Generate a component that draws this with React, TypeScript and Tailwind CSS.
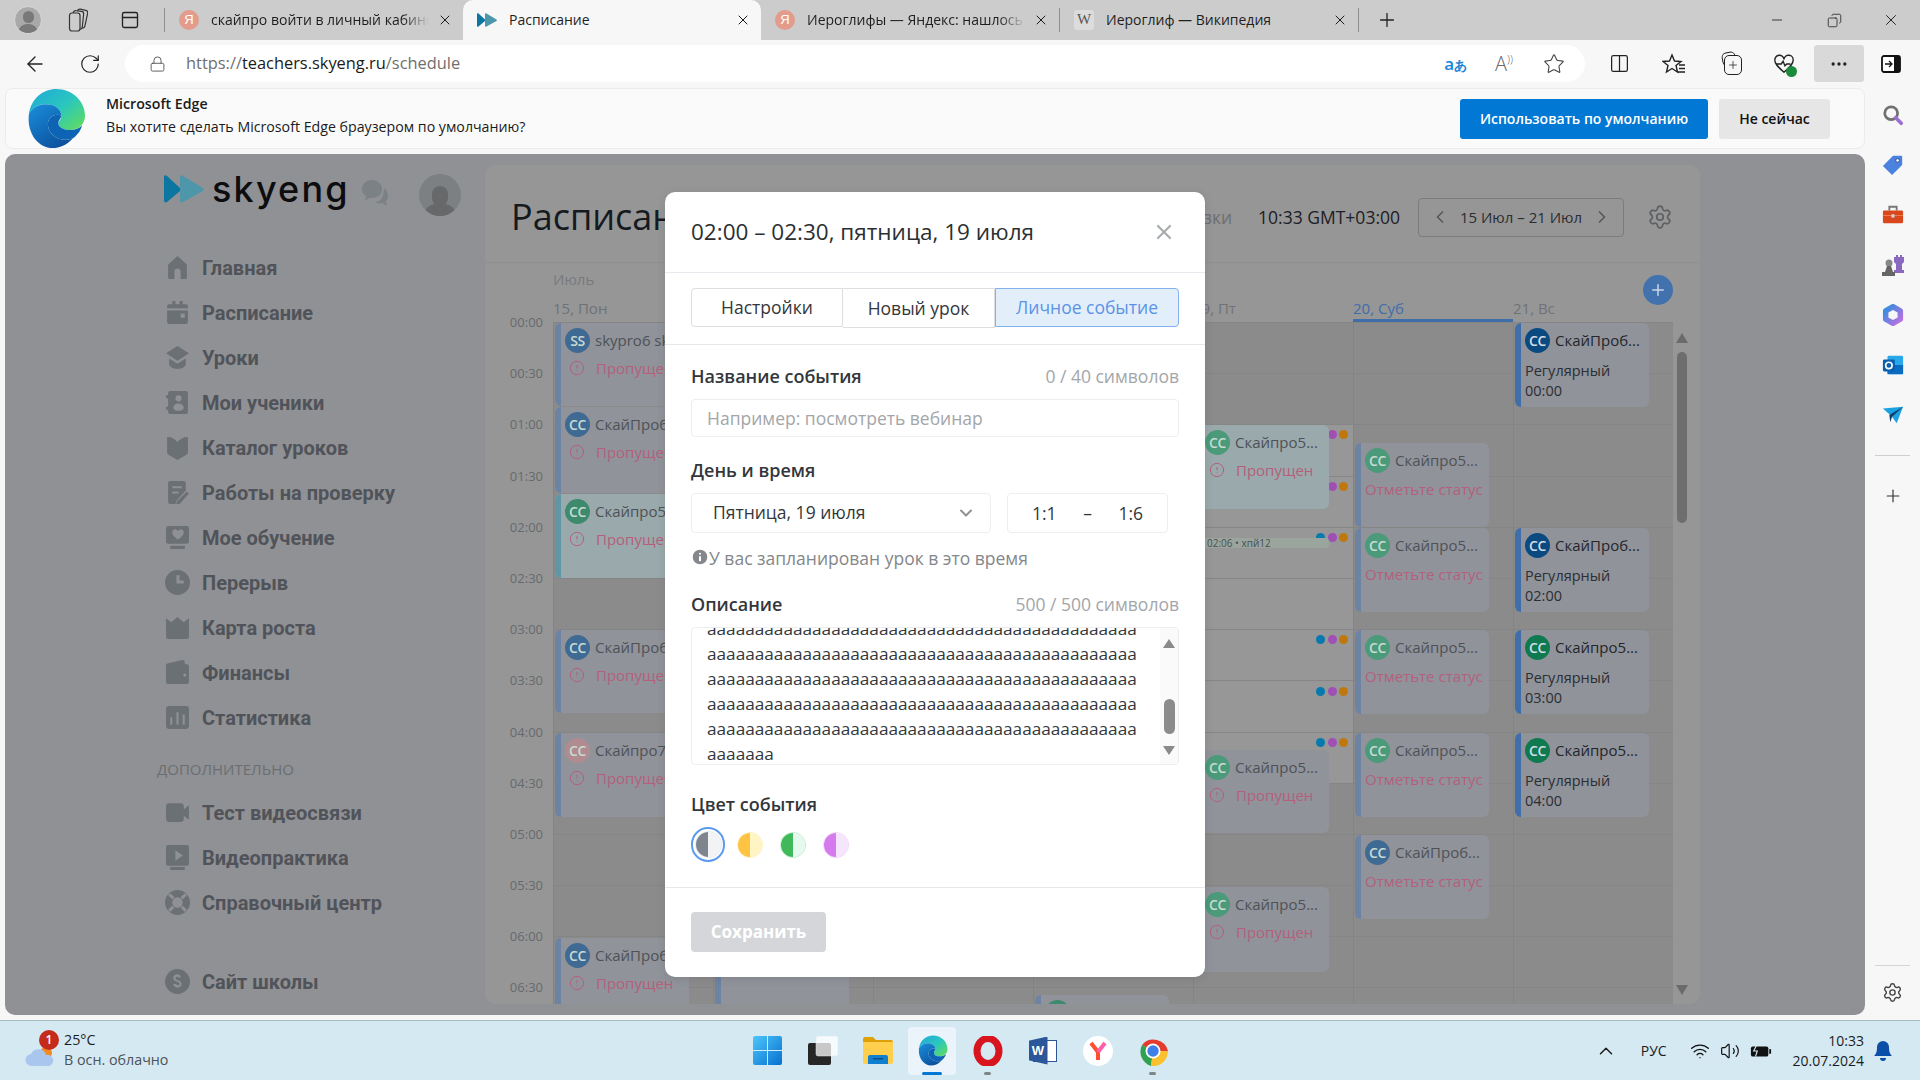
import { ReactNode } from "react";
import {
  ArrowLeft, RotateCw, Lock, Star, X, Plus, Minus, Copy, Ellipsis, Settings, Columns2, ChevronLeft,
  ChevronRight, ChevronDown, ChevronUp, Wifi, Volume2, Info, AlertCircle, PanelTop,
} from "lucide-react";

const GRID_TOP = 322;

// ---- drawn icons ----
function EdgeLogo({ className }: { className: string }) {
  return (
    <svg viewBox="0 0 64 64" className={className}>
      <defs>
        <linearGradient id="edgeA" x1="0" y1="0" x2="1" y2="0.9">
          <stop offset="0" stopColor="#1fa7dc" />
          <stop offset="0.55" stopColor="#2bc7bd" />
          <stop offset="1" stopColor="#5fdc5f" />
        </linearGradient>
        <linearGradient id="edgeB" x1="0" y1="0" x2="0.7" y2="1">
          <stop offset="0" stopColor="#1a8fdc" />
          <stop offset="1" stopColor="#0c4f9c" />
        </linearGradient>
      </defs>
      <path d="M4 28C6 11 19 1 33 1c17 0 30 13 30 28 0 9-7 15-16 15-7 0-12-3-12-7 0-3 3-3 3-8 0-7-8-12-17-12C13 17 7 22 4 28z" fill="url(#edgeA)" />
      <path d="M4 28c3-7 10-11 17-11 10 0 17 5 17 12-6-3-14 1-14 9 0 11 13 20 26 15-6 7-14 10-21 10C15 63 2 49 4 28z" fill="url(#edgeB)" />
      <path d="M24 38c0-8 8-12 14-9 0 3-3 4-3 8 0 4 5 7 12 7 6 0 10-2 13-5-2 7-6 11-10 14-13 5-26-4-26-15z" fill="#0e64b4" />
    </svg>
  );
}

function SkyengMark({ className }: { className: string }) {
  return (
    <svg viewBox="0 0 40 28" className={className}>
      <path d="M0 2c0-2 2-2 3-1l13 12c1 1 1 2 0 3L3 27c-1 1-3 0-3-1z" fill="#0b76a0" />
      <path d="M16 2c0-2 2-2 3-1l20 12c1 1 1 2 0 3L19 27c-1 1-3 0-3-1z" fill="#4e96aa" />
    </svg>
  );
}

function YandexIcon() {
  return (
    <span className="w-5 h-5 rounded-full bg-[#e39b8c] flex items-center justify-center text-white text-[13px] font-['Liberation_Sans',sans-serif]">Я</span>
  );
}

const sideIcons: Record<string, ReactNode> = {
  home: <path d="M12 1 3 9v13a1 1 0 0 0 1 1h5v-7a3 3 0 0 1 6 0v7h5a1 1 0 0 0 1-1V9z" />,
  calendar: <path fillRule="evenodd" d="M7 1h3v3h4V1h3v3h3a2 2 0 0 1 2 2v2H2V6a2 2 0 0 1 2-2h3zM2 10h20v11a2 2 0 0 1-2 2H4a2 2 0 0 1-2-2zm13 3v4h4v-4z" />,
  lessons: <path d="M12 1 1 8l11 7 11-7zM4 13v5c0 3 4 5 8 5s8-2 8-5v-5l-8 5z" />,
  students: <path fillRule="evenodd" d="M5 1h15a2 2 0 0 1 2 2v18a2 2 0 0 1-2 2H5a2 2 0 0 1-2-2v-2H1v-3h2V8H1V5h2V3a2 2 0 0 1 2-2zm8 4a3 3 0 1 0 0 6 3 3 0 0 0 0-6zm-5 12c0 2 2 3 5 3s5-1 5-3c0-2-2-4-5-4s-5 2-5 4z" />,
  book: <path d="M2 2c4 0 8 2 10 5 2-3 6-5 10-5v15c0 2-6 4-10 7-4-3-10-5-10-7z" />,
  review: <path fillRule="evenodd" d="M5 1h13a2 2 0 0 1 2 2v7L11 20l-1 3H5a2 2 0 0 1-2-2V3a2 2 0 0 1 2-2zm2 5v2h9V6zm0 5v2h6v-2zm14 0 2 2-9 10h-3v-2z" />,
  study: <path fillRule="evenodd" d="M3 1h18a2 2 0 0 1 2 2v13a2 2 0 0 1-2 2H3a2 2 0 0 1-2-2V3a2 2 0 0 1 2-2zm12 3c-1 0-2 1-2.500 2C12 5 11 4 10 4 8 4 7 5.500 7 7c0 3 3 5 5.500 7C15 12 18 10 18 7c0-1.500-1-3-3-3zM5 20h14v3H5z" />,
  clock: <path fillRule="evenodd" d="M12 0a12 12 0 1 1 0 24 12 12 0 0 1 0-24zm-1 5v8h7v-3h-4V5z" />,
  crown: <path d="M1 3l5 4 6-5 6 5 5-4v18a2 2 0 0 1-2 2H3a2 2 0 0 1-2-2z" />,
  wallet: <path fillRule="evenodd" d="M3 3l14-3a2 2 0 0 1 2 2v2h2a2 2 0 0 1 2 2v15a2 2 0 0 1-2 2H3a2 2 0 0 1-2-2V5a2 2 0 0 1 2-2zm16 10a1.500 1.500 0 1 0 0 3 1.500 1.500 0 0 0 0-3z" />,
  stats: <path fillRule="evenodd" d="M4 1h16a3 3 0 0 1 3 3v16a3 3 0 0 1-3 3H4a3 3 0 0 1-3-3V4a3 3 0 0 1 3-3zm1 11v7h2v-7zm6-5v12h2V7zm6 2v10h2V9z" />,
  video: <path d="M4 3h11a3 3 0 0 1 3 3v3l5-4v14l-5-4v3a3 3 0 0 1-3 3H4a3 3 0 0 1-3-3V6a3 3 0 0 1 3-3z" />,
  practice: <path fillRule="evenodd" d="M3 0h18a2 2 0 0 1 2 2v16a2 2 0 0 1-2 2H3a2 2 0 0 1-2-2V2a2 2 0 0 1 2-2zm7 5v10l7-5zM5 21h14v3H5z" />,
  help: <path fillRule="evenodd" d="M12 0a12 12 0 1 1 0 24 12 12 0 0 1 0-24zm0 7a5 5 0 1 0 0 10 5 5 0 0 0 0-10zM5 3 3 5l4 4 2-2zm14 0-4 4 2 2 4-4zM7 15l-4 4 2 2 4-4zm10 0-2 2 4 4 2-2z" />,
  site: <path fillRule="evenodd" d="M12 0a12 12 0 1 1 0 24 12 12 0 0 1 0-24zm3 8c0-2-1.500-3-3-3s-4 1-4 3.500C8 13 14 11.500 14 14.500c0 1.500-3.500 1.500-4 0H8c0 2 2 3.500 4 3.500s4-1.500 4-3.500c0-4-6-3-6-6 0-1.500 3.500-1.500 3.500 0z" />,
};

const navTop = [
  ["home", "Главная"], ["calendar", "Расписание"], ["lessons", "Уроки"], ["students", "Мои ученики"],
  ["book", "Каталог уроков"], ["review", "Работы на проверку"], ["study", "Мое обучение"], ["clock", "Перерыв"],
  ["crown", "Карта роста"], ["wallet", "Финансы"], ["stats", "Статистика"],
];
const navExtra = [["video", "Тест видеосвязи"], ["practice", "Видеопрактика"], ["help", "Справочный центр"]];

function NavItem({ icon, label }: { icon: string; label: string }) {
  return (
    <div className="h-[45px] flex items-center">
      <svg viewBox="0 0 24 24" className="w-[25px] h-[25px] ml-[1px] mr-[12px] fill-[#6b7074] shrink-0">{sideIcons[icon]}</svg>
      <span className="text-[20px] font-bold text-[#50545a] font-['Roboto',sans-serif]">{label}</span>
    </div>
  );
}

function SchoolSidebar() {
  return (
    <aside className="w-[480px] shrink-0 pl-[159px] flex flex-col">
      <div className="h-[58px] mt-[6px] flex items-center relative">
        <SkyengMark className="w-[40px] h-[28px]" />
        <span className="ml-[8px] text-[36px] leading-[28px] font-medium tracking-[0.06em] text-[#0d0d0f] font-['Inter',sans-serif]">skyeng</span>
        <svg viewBox="0 0 28 28" className="w-[28px] h-[28px] ml-[11px] mt-[8px] fill-[#7b8185]">
          <path d="M11 1c6 0 10 4 10 9s-4 9-10 9H8l-4 3 1-5c-3-2-4-4-4-7 0-5 4-9 10-9z" />
          <path d="M23 9c3 2 4 5 4 8 0 2-1 4-2 5l1 5-5-3c-3 1-5 0-7-1 5 0 9-4 9-14z" />
        </svg>
        <span className="ml-[30px] w-[42px] h-[42px] rounded-full bg-[#7d8083] overflow-hidden flex flex-col items-center justify-end mt-[12px]">
          <span className="w-[16px] h-[20px] rounded-full bg-[#66686a]" />
          <span className="w-[32px] h-[12px] rounded-t-full bg-[#66686a] -mt-[2px]" />
        </span>
      </div>
      <nav className="mt-[27px] flex flex-col">
        {navTop.map(([icon, label]) => <NavItem key={label} icon={icon} label={label} />)}
        <div className="h-[31px] mt-[14px] -ml-[7px] flex items-center text-[15px] text-[#6a6e73] font-['Open_Sans',sans-serif]">ДОПОЛНИТЕЛЬНО</div>
        <div className="mt-[5px]" />
        {navExtra.map(([icon, label]) => <NavItem key={label} icon={icon} label={label} />)}
        <div className="mt-[34px]"><NavItem icon="site" label="Сайт школы" /></div>
      </nav>
    </aside>
  );
}

// ---- schedule ----
type Ev = { top: number; h: number; initials?: string; avatar?: string; name?: string; time?: string; kind: "missed" | "mark" | "regular" | "plain"; tint?: string };

const columns: Ev[][] = [
  [
    { top: 323, h: 83, initials: "SS", avatar: "bg-[#3f6a93]", name: "skypro6 skypro6", kind: "missed" },
    { top: 407, h: 86, initials: "CC", avatar: "bg-[#3f6a93]", name: "СкайПроб6", kind: "missed" },
    { top: 494, h: 84, initials: "CC", avatar: "bg-[#3d8a6c]", name: "Скайпро5", kind: "missed", tint: "bg-[#9aa9ab]" },
    { top: 630, h: 83, initials: "CC", avatar: "bg-[#3f6a93]", name: "СкайПроб6", kind: "missed" },
    { top: 733, h: 84, initials: "CC", avatar: "bg-[#b08c90]", name: "Скайпро7", kind: "missed" },
    { top: 938, h: 84, initials: "CC", avatar: "bg-[#3f6a93]", name: "СкайПроб6", kind: "missed" },
  ],
  [{ top: 900, h: 130, kind: "plain" }],
  [],
  [{ top: 995, h: 84, initials: "CC", avatar: "bg-[#3d8a6c]", name: "Скайпро5", kind: "missed" }],
  [
    { top: 425, h: 84, initials: "CC", avatar: "bg-[#4b9a7a]", name: "Скайпро5...", kind: "missed", tint: "bg-[#9aa9ab]" },
    { top: 750, h: 83, initials: "CC", avatar: "bg-[#4b9a7a]", name: "Скайпро5...", kind: "missed" },
    { top: 887, h: 85, initials: "CC", avatar: "bg-[#4b9a7a]", name: "Скайпро5...", kind: "missed" },
  ],
  [
    { top: 443, h: 84, initials: "CC", avatar: "bg-[#4b9a7a]", name: "Скайпро5...", kind: "mark" },
    { top: 528, h: 84, initials: "CC", avatar: "bg-[#4b9a7a]", name: "Скайпро5...", kind: "mark" },
    { top: 630, h: 84, initials: "CC", avatar: "bg-[#4b9a7a]", name: "Скайпро5...", kind: "mark" },
    { top: 733, h: 84, initials: "CC", avatar: "bg-[#4b9a7a]", name: "Скайпро5...", kind: "mark" },
    { top: 835, h: 84, initials: "CC", avatar: "bg-[#3f6a93]", name: "СкайПроб...", kind: "mark" },
  ],
  [
    { top: 323, h: 84, initials: "CC", avatar: "bg-[#0a4a80]", name: "СкайПроб...", time: "00:00", kind: "regular" },
    { top: 528, h: 84, initials: "CC", avatar: "bg-[#0a4a80]", name: "СкайПроб...", time: "02:00", kind: "regular" },
    { top: 630, h: 84, initials: "CC", avatar: "bg-[#0f7a50]", name: "Скайпро5...", time: "03:00", kind: "regular" },
    { top: 733, h: 84, initials: "CC", avatar: "bg-[#0f7a50]", name: "Скайпро5...", time: "04:00", kind: "regular" },
  ],
];

function EventCard({ ev }: { ev: Ev }) {
  const regular = ev.kind === "regular";
  const bar = ev.tint ? "bg-[#5f97a5]" : regular ? "bg-[#3f6ea9]" : "bg-[#6c83a3]";
  return (
    <div
      className={`absolute left-[1px] w-[134px] rounded-[6px] overflow-hidden flex ${ev.tint ?? "bg-[#90939a]"}`}
      style={{ top: ev.top - GRID_TOP, height: ev.h }}
    >
      <div className={`w-[6px] shrink-0 ${bar}`} />
      {ev.kind !== "plain" && (
        <div className="flex-1 min-w-0 pl-[4px] pt-[5px]">
          <div className="flex items-center h-[25px]">
            <span className={`w-[25px] h-[25px] rounded-full shrink-0 flex items-center justify-center text-[14px] font-semibold tracking-[-0.03em] ${regular ? "text-[#d3dde6]" : "text-[#c8dbd3]"} ${ev.avatar}`}>{ev.initials}</span>
            <span className={`ml-[5px] text-[15px] whitespace-nowrap ${regular ? "text-[#23262a]" : "text-[#4e5257]"}`}>{ev.name}</span>
          </div>
          {regular && (
            <div className="mt-[8px] text-[14.5px] leading-[20px] text-[#2b2e33]">Регулярный<br />{ev.time}</div>
          )}
          {ev.kind === "missed" && (
            <div className="mt-[4px] flex items-center h-[22px] text-[15px] text-[#b55f7c]">
              <AlertCircle className="w-[16px] h-[16px] ml-[4px] mr-[11px] shrink-0" strokeWidth={1.5} />Пропущен
            </div>
          )}
          {ev.kind === "mark" && <div className="mt-[5px] h-[22px] text-[15px] leading-[22px] text-[#b55f7c] whitespace-nowrap">Отметьте статус</div>}
        </div>
      )}
    </div>
  );
}

const days = ["15, Пон", "16, Вт", "17, Ср", "18, Чт", "19, Пт", "20, Суб", "21, Вс"];
const times = Array.from({ length: 14 }, (_, i) => `${String(Math.floor(i / 2)).padStart(2, "0")}:${i % 2 ? "30" : "00"}`);
const dotRows: [number, boolean][] = [[434, false], [486, false], [537, true], [639, true], [691, true], [742, true]];

function Schedule() {
  return (
    <main className="w-[1215px] shrink-0 mt-[11px] h-[839px] rounded-[10px] bg-[#969696] flex flex-col overflow-hidden font-['Open_Sans',sans-serif] relative">
      <header className="h-[98px] shrink-0 border-b border-[#8f8f8f] flex items-center pt-[7px] pl-[26px] pr-[27px]">
        <h1 className="text-[36px] text-[#151a1f] font-normal">Расписание</h1>
        <span className="ml-auto text-[17.500px] text-[#6c6f72]">Подсказки</span>
        <span className="ml-[26px] text-[17.500px] text-[#1d2024]">10:33 GMT+03:00</span>
        <div className="ml-[18px] w-[206px] h-[39px] rounded-[4px] border border-[#7b7c7e] flex items-center justify-between px-[11px] text-[15px] text-[#2a2d31]">
          <ChevronLeft className="w-[20px] h-[20px] text-[#55585c]" />15 Июл – 21 Июл<ChevronRight className="w-[20px] h-[20px] text-[#55585c]" />
        </div>
        <Settings className="ml-[23px] w-[26px] h-[26px] text-[#5e6164]" strokeWidth={1.6} />
      </header>
      <div className="flex-1 flex min-h-0">
        <div className="w-[68px] shrink-0 pt-[49px]">
          {times.map((t) => (
            <div key={t} className="h-[51.2px] pr-[10px] text-right text-[13px] leading-[20px] text-[#666a6e]">{t}</div>
          ))}
        </div>
        <div className="w-[1120px] shrink-0 flex flex-col">
          <div className="h-[32px] shrink-0 flex items-center text-[15px] text-[#777a7d]">Июль</div>
          <div className="h-[27px] shrink-0 grid grid-cols-7">
            {days.map((d, i) => (
              <div key={d} className={`pt-[3px] text-[15px] leading-[21px] ${i === 5 ? "text-[#3f6ea9] border-b-[3px] border-[#3f6ea9]" : "text-[#6f7276]"}`}>{d}</div>
            ))}
          </div>
          <div className="flex-1 grid grid-cols-7 overflow-hidden">
            {columns.map((events, c) => (
              <div key={c} className="relative border-l border-[#848484] flex flex-col">
                {times.map((t, r) => (
                  <div key={t} className={`h-[51.2px] shrink-0 border-t ${c === 4 && r >= 2 && r < 9 ? "bg-[#979797] border-[#868686]" : "bg-[#8b8b8b] border-[#858585]"}`} />
                ))}
                {c === 4 && (
                  <>
                    {dotRows.map(([y, blue]) => (
                      <div key={y} className="absolute right-[5px] flex gap-[2.5px]" style={{ top: y - 4.5 - GRID_TOP }}>
                        {blue && <span className="w-[9px] h-[9px] rounded-full bg-[#0779ae]" />}
                        <span className="w-[9px] h-[9px] rounded-full bg-[#a050b4]" />
                        <span className="w-[9px] h-[9px] rounded-full bg-[#c0780e]" />
                      </div>
                    ))}
                    <div className="absolute left-[10px] w-[125px] top-[216px] h-[10px] bg-[#9aa59e] rounded-r-[4px]" />
                    <div className="absolute left-[13px] top-[213px] text-[10px] leading-[16px] text-[#4b4f53] whitespace-nowrap">02:06 • хпй12</div>
                  </>
                )}
                {events.map((ev) => <EventCard key={ev.top} ev={ev} />)}
              </div>
            ))}
          </div>
        </div>
        <div className="w-[18px] shrink-0 mt-[59px] flex flex-col items-center">
          <svg viewBox="0 0 12 10" className="w-[12px] h-[10px] mt-[11px] fill-[#6b6b6c]"><path d="M6 0l6 10H0z" /></svg>
          <div className="w-[10px] h-[171px] mt-[9px] rounded-full bg-[#6e6e6f]" />
          <svg viewBox="0 0 12 10" className="w-[12px] h-[10px] mt-auto mb-[9px] fill-[#6b6b6c]"><path d="M6 10L0 0h12z" /></svg>
        </div>
      </div>
      <span className="absolute left-[1158px] top-[110px] w-[30px] h-[30px] rounded-full bg-[#4272ad] flex items-center justify-center">
        <Plus className="w-[18px] h-[18px] text-[#c9d6e6]" strokeWidth={2} />
      </span>
    </main>
  );
}

// ---- modal ----
const swatches = [
  ["bg-[#fec343]", "bg-[#fff4c4]", "border-[#fff0b8]"],
  ["bg-[#3fb95a]", "bg-[#e6f9ee]", "border-[#bfeccd]"],
  ["bg-[#d57bee]", "bg-[#f6e6fd]", "border-[#efd5fa]"],
];

function FieldHead({ title, count }: { title: string; count?: string }) {
  return (
    <div className="h-[24px] flex items-center justify-between">
      <span className="text-[18px] font-semibold text-[#33373b]">{title}</span>
      {count && <span className="text-[17.500px] text-[#a3a6aa]">{count}</span>}
    </div>
  );
}

function EventModal() {
  const aLine = "а".repeat(45);
  return (
    <section className="absolute left-[665px] top-[192px] w-[540px] h-[785px] bg-white rounded-[10px] font-['Open_Sans',sans-serif] text-[#33373b] flex flex-col shadow-[0_2px_10px_rgba(0,0,0,0.1)]">
      <div className="h-[81px] shrink-0 border-b border-[#e7ebf0] flex items-center justify-between pl-[26px] pr-[29px]">
        <h2 className="text-[22.500px] font-normal text-[#2b2f33]">02:00 – 02:30, пятница, 19 июля</h2>
        <X className="w-[24px] h-[24px] text-[#a8abae]" strokeWidth={2.2} />
      </div>
      <div className="h-[72px] shrink-0 border-b border-[#e6e8ea] px-[26px] pt-[15px]">
        <div className="flex text-[17.500px]">
          <div className="w-[152px] h-[39px] rounded-l-[4px] border border-[#dcdee0] flex items-center justify-center">Настройки</div>
          <div className="w-[152px] h-[40px] border-y border-r border-[#dcdee0] flex items-center justify-center">Новый урок</div>
          <div className="w-[184px] h-[39px] rounded-r-[4px] border border-[#83b1ee] bg-[#e3eefb] text-[#5a93e6] flex items-center justify-center">Личное событие</div>
        </div>
      </div>
      <div className="flex-1 px-[26px] pt-[19px]">
        <FieldHead title="Название события" count="0 / 40 символов" />
        <div className="mt-[11px] h-[38px] rounded-[4px] border border-[#eceef0] flex items-center pl-[15px] text-[17.500px] text-[#a3a6a9]">Например: посмотреть вебинар</div>
        <div className="mt-[21px]"><FieldHead title="День и время" /></div>
        <div className="mt-[11px] flex gap-[16px] text-[17.500px]">
          <div className="w-[300px] h-[40px] rounded-[4px] border border-[#eceef0] flex items-center pl-[21px] pr-[14px] justify-between"><span className="-mt-[1px]">Пятница, 19 июля</span><ChevronDown className="w-[20px] h-[20px] text-[#909396]" strokeWidth={2.5} /></div>
          <div className="w-[161px] h-[40px] rounded-[4px] border border-[#eceef0] flex items-center justify-between px-[24px]"><span>1:1</span><span>–</span><span>1:6</span></div>
        </div>
        <div className="mt-[13px] h-[24px] flex items-center text-[17.500px] text-[#84878b]">
          <Info className="w-[20px] h-[20px] -ml-[1px] -mr-[1px] text-white fill-[#84878b] -mt-[3px] shrink-0" strokeWidth={2.5} />У вас запланирован урок в это время
        </div>
        <div className="mt-[22px]"><FieldHead title="Описание" count="500 / 500 символов" /></div>
        <div className="mt-[11px] h-[138px] rounded-[4px] border border-[#eceef0] overflow-hidden flex">
          <div className="flex-1 pl-[15px] -mt-[12px] text-[17.200px] leading-[25px] text-[#33373b]">
            {[0, 1, 2, 3, 4].map((i) => <div key={i}>{aLine}</div>)}
            <div>ааааааа</div>
          </div>
          <div className="w-[18px] shrink-0 bg-[#fafafa] flex flex-col items-center">
            <svg viewBox="0 0 12 9" className="w-[12px] h-[9px] mt-[11px] fill-[#8a8a8a]"><path d="M6 0l6 9H0z" /></svg>
            <div className="w-[11px] h-[35px] mt-[51px] rounded-full bg-[#8b8b8b]" />
            <svg viewBox="0 0 12 9" className="w-[12px] h-[9px] mt-[12px] fill-[#8a8a8a]"><path d="M6 9L0 0h12z" /></svg>
          </div>
        </div>
        <div className="mt-[27px]"><FieldHead title="Цвет события" /></div>
        <div className="mt-[11px] flex items-center h-[35px]">
          <div className="w-[34px] h-[35px] rounded-full border-2 border-[#5b9bf0] flex items-center justify-center">
            <div className="w-[27px] h-[27px] rounded-full overflow-hidden flex border border-[#e5e7ea]">
              <span className="w-1/2 bg-[#7f858d]" /><span className="w-1/2 bg-[#f1f3f5]" />
            </div>
          </div>
          {swatches.map(([a, b, edge], i) => (
            <div key={a} className={`w-[26px] h-[26px] rounded-full overflow-hidden flex border ${edge} ${i === 0 ? "ml-[12px]" : "ml-[17px]"}`}>
              <span className={`w-1/2 ${a}`} /><span className={`w-1/2 ${b}`} />
            </div>
          ))}
        </div>
      </div>
      <div className="h-[90px] shrink-0 border-t border-[#e6e8ea] px-[26px] pt-[24px]">
        <div className="w-[135px] h-[40px] rounded-[4px] bg-[#d4d6d9] text-white text-[17px] font-bold flex items-center justify-center">Сохранить</div>
      </div>
    </section>
  );
}

// ---- browser chrome ----
function Tab({ icon, title, active, fade }: { icon: ReactNode; title: string; active?: boolean; fade?: boolean }) {
  return (
    <div className={`w-[298px] h-[40px] shrink-0 flex items-center pl-[14px] pr-[10px] pb-[1px] ${active ? "bg-[#f7f7f7] rounded-t-[10px]" : ""}`}>
      <span className="w-[20px] h-[20px] shrink-0 flex items-center justify-center">{icon}</span>
      <span className={`ml-[12px] w-[218px] overflow-hidden whitespace-nowrap text-[14px] text-[#1e1e1e] ${fade ? "[mask-image:linear-gradient(90deg,#000_88%,transparent)]" : ""}`}>{title}</span>
      <X className="w-[16px] h-[16px] ml-auto text-[#1b1b1b]" strokeWidth={1.5} />
    </div>
  );
}

function BrowserTop() {
  return (
    <>
      <div className="h-[40px] shrink-0 bg-[#cccccc] flex items-center">
        <span className="ml-[14px] w-[28px] h-[28px] rounded-full bg-[#a9a9a9] border border-[#d8d8d8] overflow-hidden flex flex-col items-center justify-end">
          <span className="w-[11px] h-[12px] rounded-full bg-[#797979]" />
          <span className="w-[20px] h-[9px] rounded-t-full bg-[#797979] mt-[1px]" />
        </span>
        <svg viewBox="0 0 20 24" className="ml-[26px] w-[20px] h-[24px] fill-none stroke-[#333] stroke-[1.2]">
          <rect x="8" y="1.500" width="10.500" height="18" rx="2.500" transform="rotate(12 13 10)" />
          <rect x="4.500" y="3" width="10.500" height="18" rx="2.500" fill="#cccccc" transform="rotate(6 10 12)" />
          <rect x="1.500" y="5" width="10.500" height="18" rx="2.500" fill="#cccccc" />
        </svg>
        <PanelTop className="ml-[32px] w-[20px] h-[20px] text-[#222]" strokeWidth={1.6} />
        <span className="ml-[24px] w-px h-[24px] bg-[#8e8e8e]" />
        <Tab icon={<YandexIcon />} title="скайпро войти в личный кабинет" fade />
        <Tab active icon={<SkyengMark className="w-[20px] h-[16px]" />} title="Расписание" />
        <Tab icon={<YandexIcon />} title="Иероглифы — Яндекс: нашлось" fade />
        <span className="w-px h-[24px] bg-[#8e8e8e]" />
        <Tab icon={<span className="w-[20px] h-[20px] rounded-[3px] bg-[#dcdcdc] flex items-center justify-center text-[15px] text-[#555] font-['Liberation_Serif',serif]">W</span>} title="Иероглиф — Википедия" />
        <span className="w-px h-[24px] bg-[#8e8e8e]" />
        <Plus className="ml-[17px] w-[22px] h-[22px] text-[#222]" strokeWidth={1.4} />
        <Minus className="ml-auto w-[16px] h-[16px] text-[#222]" strokeWidth={1.3} />
        <Copy className="ml-[42px] w-[15px] h-[15px] text-[#222] -scale-x-100" strokeWidth={1.3} />
        <X className="ml-[40px] mr-[20px] w-[18px] h-[18px] text-[#222]" strokeWidth={1.3} />
      </div>
      <div className="h-[48px] shrink-0 bg-[#f7f7f7] flex items-center pb-[1px]">
        <ArrowLeft className="ml-[23px] w-[24px] h-[24px] text-[#222]" strokeWidth={1.4} />
        <RotateCw className="ml-[32px] w-[22px] h-[22px] text-[#222]" strokeWidth={1.3} />
        <div className="ml-[24px] w-[1460px] h-[37px] rounded-full bg-white flex items-center">
          <Lock className="ml-[24px] w-[17px] h-[18px] text-[#555]" strokeWidth={1.3} />
          <span className="ml-[20px] text-[16.400px] text-[#6f6f6f]">https://<span className="text-[#1b1b1b]">teachers.skyeng.ru</span>/schedule</span>
          <span className="ml-auto text-[17px] font-semibold text-[#1b84d8]">a<span className="text-[13px]">あ</span></span>
          <span className="ml-[28px] text-[20px] text-[#6a6a6a] font-light">A<span className="text-[11px] align-super">))</span></span>
          <Star className="ml-[30px] mr-[20px] w-[22px] h-[22px] text-[#444]" strokeWidth={1.2} />
        </div>
        <Columns2 className="ml-[24px] w-[21px] h-[21px] text-[#222]" strokeWidth={1.4} />
        <svg viewBox="0 0 24 24" className="ml-[32px] w-[24px] h-[24px] fill-none stroke-[#222] stroke-[1.4]">
          <path d="M10 3l2.500 6 6.500.5-5 4 1.500 6.500L10 16.500 4.500 20 6 13.500l-5-4L7.500 9z" />
          <path d="M17 13h6M17 16.500h6M15.500 20H23" />
        </svg>
        <span className="ml-[34px] relative w-[22px] h-[24px] flex items-center justify-center">
          <span className="absolute left-[2px] top-0 w-[14px] h-[14px] border-[1.4px] border-[#222] rounded-[5px] -rotate-12" />
          <span className="relative mt-[3px] ml-[3px] w-[18px] h-[20px] bg-[#f7f7f7] border-[1.4px] border-[#222] rounded-[5px] flex items-center justify-center"><Plus className="w-[12px] h-[12px] text-[#222]" strokeWidth={1.5} /></span>
        </span>
        <span className="ml-[31px] relative w-[22px] h-[22px]">
          <svg viewBox="0 0 24 24" className="w-[22px] h-[22px] fill-none stroke-[#222] stroke-[1.5]"><path d="M12 21C5 15 2 12 2 8a5 5 0 0 1 10-1 5 5 0 0 1 10 1c0 4-3 7-10 13zM4 12h5l2-3 2 5 2-2h4" /></svg>
          <span className="absolute -right-[2px] -bottom-[2px] w-[11px] h-[11px] rounded-full bg-[#1a8a3d]" />
        </span>
        <span className="ml-[19px] w-[50px] h-[37px] rounded-[3px] bg-[#d9d9d9] flex items-center justify-center"><Ellipsis className="w-[20px] h-[20px] text-[#222]" strokeWidth={2} /></span>
        <svg viewBox="0 0 20 20" className="ml-[17px] w-[20px] h-[20px]">
          <rect x="1" y="2" width="18" height="16" rx="2" fill="#fff" stroke="#111" strokeWidth="1.800" />
          <rect x="13" y="2" width="6" height="16" fill="#111" />
          <path d="M4 10h6M8 7l3 3-3 3" fill="none" stroke="#111" strokeWidth="1.300" />
        </svg>
      </div>
    </>
  );
}

function InfoBar() {
  return (
    <div className="h-[61px] shrink-0 rounded-[8px] bg-[#fafafa] border border-[#ececec] flex items-center font-['Open_Sans',sans-serif]">
      <EdgeLogo className="ml-[19px] w-[61px] h-[61px]" />
      <div className="ml-[20px] -mt-[7px] text-[14.200px] leading-[23px] text-[#1b1b1b]">
        <div className="font-semibold">Microsoft Edge</div>
        <div>Вы хотите сделать Microsoft Edge браузером по умолчанию?</div>
      </div>
      <div className="ml-auto w-[248px] h-[40px] rounded-[3px] bg-[#0078d4] text-white text-[14px] font-semibold flex items-center justify-center">Использовать по умолчанию</div>
      <div className="ml-[11px] mr-[34px] w-[111px] h-[40px] rounded-[3px] bg-[#e6e6e6] text-[#111] text-[14px] font-semibold flex items-center justify-center">Не сейчас</div>
    </div>
  );
}

function EdgeSidebar() {
  const box = "h-[50px] flex items-center justify-center shrink-0";
  return (
    <aside className="w-[55px] shrink-0 flex flex-col items-center pt-[2px]">
      <div className={box}><svg viewBox="0 0 24 24" className="w-[22px] h-[22px] fill-none"><circle cx="10" cy="10" r="7" stroke="#707070" strokeWidth="3" /><path d="M15 15l6 6" stroke="#9b6fd0" strokeWidth="4" strokeLinecap="round" /></svg></div>
      <div className={box}><svg viewBox="0 0 24 24" className="w-[22px] h-[22px]"><path d="M12 2h9a1 1 0 0 1 1 1v9L11 23 1 13z" fill="#4c82df" /><circle cx="17" cy="7" r="2" fill="#fff" stroke="#24408f" /></svg></div>
      <div className={box}><svg viewBox="0 0 24 24" className="w-[22px] h-[22px]"><path d="M8 7V3h8v4" fill="none" stroke="#777" strokeWidth="2" /><rect x="1" y="7" width="22" height="14" rx="1.500" fill="#d8481c" /><rect x="1" y="12" width="22" height="1" fill="#f08050" /><circle cx="12" cy="13" r="2" fill="#cfcfcf" /></svg></div>
      <div className={box}><svg viewBox="0 0 24 24" className="w-[24px] h-[24px]"><path d="M15 2h2v2h2V2h2v2h2v5l-2 2v6h2v3H13v-3h2v-6l-2-2V4h2z" fill="#8a68c0" /><circle cx="8" cy="10" r="3.500" fill="#888" /><path d="M6 13h4l2 6h2v4H1v-4h3z" fill="#666" /></svg></div>
      <div className={box}><svg viewBox="0 0 24 24" className="w-[22px] h-[22px]"><defs><linearGradient id="m365" x1="0" y1="0" x2="1" y2="1"><stop offset="0" stopColor="#2f8fe0" /><stop offset="1" stopColor="#c070e0" /></linearGradient></defs><path d="M12 3l8 4.500v9L12 21l-8-4.500v-9z" fill="none" stroke="url(#m365)" strokeWidth="6" strokeLinejoin="round" /></svg></div>
      <div className={box}><svg viewBox="0 0 24 24" className="w-[22px] h-[22px]"><rect x="6" y="2" width="17" height="20" rx="1.500" fill="#28a8ea" /><path d="M6 12h17v10H6z" fill="#0a6cc0" /><rect x="1" y="6" width="13" height="13" rx="1.500" fill="#0a5fb0" /><circle cx="7.500" cy="12.500" r="3.500" fill="none" stroke="#fff" strokeWidth="1.800" /></svg></div>
      <div className={box}><svg viewBox="0 0 24 24" className="w-[22px] h-[22px]"><path d="M1 5l22-2-7 18-5-7z" fill="#1ba1e2" /><path d="M23 3L8 12l1 8 2-6z" fill="#123e6b" /></svg></div>
      <div className="w-[35px] h-px bg-[#cfcfcf] mt-[15px]" />
      <Plus className="mt-[30px] w-[20px] h-[20px] text-[#333]" strokeWidth={1.4} />
      <div className="mt-auto w-[35px] h-px bg-[#d4d4d4]" />
      <Settings className="mt-[16px] mb-[17px] w-[21px] h-[21px] text-[#444]" strokeWidth={1.6} />
    </aside>
  );
}

// ---- taskbar ----
function TaskSlot({ children, active, dot }: { children: ReactNode; active?: boolean; dot?: boolean }) {
  return (
    <div className={`relative w-[55px] h-[48px] flex items-center justify-center ${active ? "before:absolute before:left-[3px] before:w-[48px] before:h-[48px] before:rounded-[4px] before:bg-[#eaf4fa]" : ""}`}>
      <span className="relative flex">{children}</span>
      {active && <span className="absolute bottom-[0px] left-[17px] w-[20px] h-[3px] rounded-full bg-[#0078d4]" />}
      {dot && <span className="absolute bottom-[0px] left-[24px] w-[7px] h-[3px] rounded-full bg-[#7d8588]" />}
    </div>
  );
}

function Taskbar() {
  return (
    <footer className="h-[60px] shrink-0 bg-[#d5e9f3] border-t border-[#a9b7c0] flex items-center font-['Open_Sans',sans-serif]">
      <div className="w-[740px] shrink-0 flex items-center pl-[25px] relative">
        <svg viewBox="0 0 30 24" className="w-[30px] h-[24px] mt-[10px]"><circle cx="21" cy="9" r="6" fill="#f08a24" /><path d="M7 22a6 6 0 0 1-1-12 8 8 0 0 1 15 1 5.500 5.500 0 0 1 3 11z" fill="#a9c6ef" /></svg>
        <span className="absolute left-[39px] -top-[2px] w-[20px] h-[20px] rounded-full bg-[#c42b1c] text-white text-[12px] font-semibold flex items-center justify-center">1</span>
        <div className="ml-[9px] -mt-[2px] text-[14.300px] leading-[20px]">
          <div className="text-[#1c1c1c]">25°C</div>
          <div className="text-[#4c5256]">В осн. облачно</div>
        </div>
      </div>
      <TaskSlot><svg viewBox="0 0 29 29" className="w-[29px] h-[29px]"><defs><linearGradient id="win" x1="0" y1="0" x2="1" y2="1"><stop offset="0" stopColor="#4dc6fa" /><stop offset="1" stopColor="#0670d0" /></linearGradient></defs><path d="M0 2a2 2 0 0 1 2-2h12v14H0zM15 0h12a2 2 0 0 1 2 2v12H15zM0 15h14v14H2a2 2 0 0 1-2-2zM15 15h14v12a2 2 0 0 1-2 2H15z" fill="url(#win)" /></svg></TaskSlot>
      <TaskSlot><svg viewBox="0 0 30 29" className="w-[30px] h-[29px]"><rect x="0" y="7" width="23" height="22" rx="2" fill="#262626" /><rect x="8" y="0" width="22" height="20" rx="2" fill="#fff" fillOpacity="0.75" stroke="#e4e4e4" strokeWidth="0.5" /></svg></TaskSlot>
      <TaskSlot><svg viewBox="0 0 30 27" className="w-[30px] h-[27px]"><path d="M0 2a2 2 0 0 1 2-2h8l3 3h15a2 2 0 0 1 2 2v3H0z" fill="#e0a008" /><path d="M0 5h30v20a2 2 0 0 1-2 2H2a2 2 0 0 1-2-2z" fill="#fdcf4d" /><path d="M5 27v-7a2 2 0 0 1 2-2h16a2 2 0 0 1 2 2v7z" fill="#0f7fd0" /><rect x="10" y="21" width="10" height="1.500" fill="#084f88" /></svg></TaskSlot>
      <TaskSlot active><EdgeLogo className="w-[31px] h-[31px]" /></TaskSlot>
      <TaskSlot dot><svg viewBox="0 0 30 30" className="w-[30px] h-[30px]"><ellipse cx="15" cy="15" rx="11" ry="12.500" fill="none" stroke="#d8141f" strokeWidth="7" /></svg></TaskSlot>
      <TaskSlot><div className="relative w-[28px] h-[28px]"><div className="absolute right-0 top-[3px] w-[24px] h-[22px] bg-white border border-[#2b579a]" /><div className="absolute left-0 top-0 w-[19px] h-[28px] bg-[#2b579a] [clip-path:polygon(0_15%,100%_0,100%_100%,0_85%)] flex items-center justify-center text-white text-[13px] font-bold font-['Liberation_Sans',sans-serif]">W</div></div></TaskSlot>
      <TaskSlot><svg viewBox="0 0 30 30" className="w-[30px] h-[30px]"><circle cx="15" cy="15" r="15" fill="#fff" /><path d="M8 7l7 9v8" fill="none" stroke="#ff4d2e" strokeWidth="4" /><path d="M22 7l-7 9" fill="none" stroke="#ff5fa8" strokeWidth="4" /></svg></TaskSlot>
      <TaskSlot dot><svg viewBox="0 0 30 30" className="w-[30px] h-[30px]"><path d="M15 15L4 9a15 15 0 0 1 26 6H15z" fill="#e33b2e" /><path d="M15 15L4 9a15 15 0 0 0 9 21z" fill="#2fa14f" /><path d="M15 15h15a15 15 0 0 1-17 15z" fill="#fbc02d" /><circle cx="15" cy="15" r="7.500" fill="#fff" /><circle cx="15" cy="15" r="5.700" fill="#3f7fe8" /></svg></TaskSlot>
      <div className="ml-auto flex items-center">
        <ChevronUp className="w-[22px] h-[22px] text-[#1c1c1c]" strokeWidth={1.6} />
        <span className="ml-[24px] text-[14px] text-[#1c1c1c]">РУС</span>
        <Wifi className="ml-[23px] w-[20px] h-[20px] text-[#111]" strokeWidth={1.6} />
        <Volume2 className="ml-[10px] w-[20px] h-[20px] text-[#111]" strokeWidth={1.4} />
        <svg viewBox="0 0 24 16" className="ml-[10px] w-[22px] h-[16px]"><rect x="1" y="3" width="19" height="11" rx="2" fill="#111" /><rect x="21" y="6" width="2" height="5" fill="#111" /><path d="M8 0L4 8h4l-2 6" fill="none" stroke="#d5e9f3" strokeWidth="1.200" /></svg>
        <div className="ml-[21px] text-[14px] leading-[20px] text-right text-[#1c1c1c]"><div>10:33</div><div>20.07.2024</div></div>
        <svg viewBox="0 0 20 20" className="ml-[9px] mr-[27px] w-[20px] h-[22px] fill-[#0a4ea8]"><path d="M10 0a6 6 0 0 1 6 6c0 5 1 7 3 9H1c2-2 3-4 3-9a6 6 0 0 1 6-6zM7 17h6a3 3 0 0 1-6 0z" /></svg>
      </div>
    </footer>
  );
}

export default function App() {
  return (
    <div className="relative w-[1920px] h-[1080px] overflow-hidden bg-[#f7f7f7] flex flex-col font-['Open_Sans',sans-serif]">
      <BrowserTop />
      <div className="flex-1 min-h-0 flex">
        <div className="w-[1865px] shrink-0 pl-[5px] flex flex-col">
          <InfoBar />
          <div className="mt-[5px] h-[861px] rounded-[10px] bg-[#909194] flex overflow-hidden">
            <SchoolSidebar />
            <Schedule />
          </div>
        </div>
        <EdgeSidebar />
      </div>
      <Taskbar />
      <EventModal />
    </div>
  );
}
